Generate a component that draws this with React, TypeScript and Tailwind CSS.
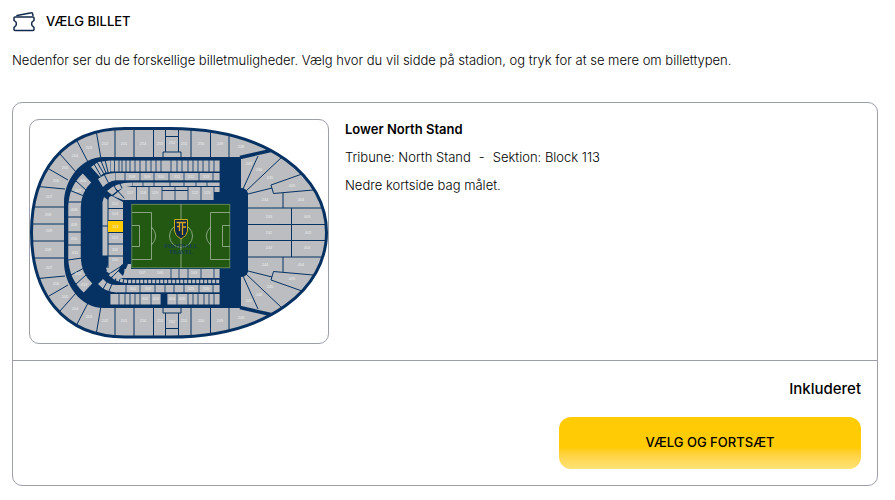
import React from "react";

const NAVY = "#063263";
const SEAT = "#bbbdc0";
const OUTLINE =
  "M125 128.500C62 128.500 31.500 173 31.500 232.500S62 337 125 337H170C270 337 326.500 288 326.500 232.500S270 128.500 170 128.500Z";

type Line = [number, number, number, number];
type Label = [number, number, string];

const outerLines: Line[] = [
  [115, 128, 115, 158],
  [134, 128, 134, 158],
  [153.5, 128, 153.5, 158],
  [191, 128, 191, 158],
  [210.5, 129, 210.5, 158],
  [229, 133, 229, 158],
  [96, 130, 101, 159],
  [76, 139, 88, 162],
  [60, 154, 76, 172],
  [49, 169, 68, 180],
  [33, 186, 65, 189],
  [31, 207, 65, 207],
  [30, 224, 65, 224],
  [243, 189, 258, 156],
  [246, 191, 282, 157],
  [248, 194, 272, 188],
  [283, 193, 283, 208],
  [248, 208, 326, 208],
  [291.5, 208, 291.5, 233],
  [248, 224.5, 328, 224.5],
];

const outerLabels: Label[] = [
  [49, 197, "207"], [48, 215, "208"], [49, 231, "209"], [56, 181, "206"],
  [65, 168, "205"], [75, 156, "204"], [89, 148, "203"], [105, 144, "202"],
  [124, 144, "201"], [143, 144, "254"], [160, 144, "253"], [172, 143, "252"],
  [184, 144, "251"], [201, 144, "250"], [220, 144, "249"], [241, 147, "248"],
  [249, 164, "247"], [259, 170, "246"], [270, 178, "245"], [292, 186, "405"],
  [265, 200, "244"], [301, 200, "404"], [269, 217, "243"], [307, 217, "403"],
  [269, 233, "242"], [308, 233, "402"],
];

function Lines({ items, width = 1 }: { items: Line[]; width?: number }) {
  return (
    <g stroke={NAVY} strokeWidth={width} fill="none">
      {items.map(([x1, y1, x2, y2], i) => (
        <line key={i} x1={x1} y1={y1} x2={x2} y2={y2} />
      ))}
    </g>
  );
}

function Row({ y, h, xs }: { y: number; h: number; xs: number[] }) {
  return (
    <g fill={SEAT}>
      {xs.slice(0, -1).map((x, i) => (
        <rect key={x} x={x + 0.4} y={y} width={xs[i + 1] - x - 0.8} height={h} />
      ))}
    </g>
  );
}

function OuterHalf() {
  return (
    <g>
      <Lines items={outerLines} />
      <path d="M165.5 128V152M178.5 128V152M165.5 136.5H178.5M163 157V152H181V157" fill="none" stroke={NAVY} />
      <path d="M302 174L271 185L273.500 193.500L313 190" fill="none" stroke={NAVY} />
      <path d="M240 157.500L273 150" stroke={NAVY} strokeWidth="3.500" />
    </g>
  );
}

function Labels({ items }: { items: Label[] }) {
  return (
    <g fill="#eceded" fontSize="4" textAnchor="middle" fontFamily="Liberation Sans, sans-serif">
      {items.map(([x, y, t], i) => (
        <text key={i} x={x} y={y + 1}>{t}</text>
      ))}
    </g>
  );
}

function StadiumMap() {
  return (
    <svg viewBox="30 120 298 223" className="block h-auto w-full" role="img" aria-label="Stadion">
      <clipPath id="stadium-outline">
        <path d={OUTLINE} />
      </clipPath>
      <path d={OUTLINE} fill={SEAT} />
      <g clipPath="url(#stadium-outline)">
        <OuterHalf />
        <g transform="translate(0 465) scale(1 -1)">
          <OuterHalf />
        </g>
      </g>
      <path d={OUTLINE} fill="none" stroke={NAVY} strokeWidth="3" />
      <path
        d="M104 157H241V188Q246 188 248 193V272Q246 277 241 277V308H104C80 308 64 284 64 262V203C64 181 80 157 104 157Z"
        fill={NAVY}
      />

      {/* Left curve of the middle tier */}
      <path d="M74.500 232V207Q75 189 87 178M74.500 232V258Q75 276 88 288" fill="none" stroke={SEAT} strokeWidth="12.500" />
      <Lines
        items={[
          [68, 202, 82, 202], [67, 217, 82, 217], [67, 232, 82, 232], [67, 245, 82, 245],
          [68, 260, 82, 258], [71, 275, 84, 268], [76, 181, 86, 190], [69, 190, 84, 196],
          [76, 284, 86, 275],
        ]}
      />

      {/* Upper rows */}
      <path d="M91 167L98 162L110 160.500V172Q103 172 100 177Z" fill={SEAT} />
      <Lines items={[[94, 164, 101, 176], [97, 162, 104, 174], [101, 161, 106, 173], [105, 160, 108, 172]]} />
      <Row y={160.5} h={11} xs={[110, 114.5, 119, 122, 126, 130, 135, 140, 146, 151, 156, 161, 171, 177, 182, 188, 193, 198, 203, 209, 214, 220]} />
      <path d="M98 179Q105 173 115 173V180.500Q109 181 103 187Z" fill={SEAT} />
      <Lines items={[[104, 174, 109, 184]]} />
      <Row y={173} h={7.3} xs={[115, 125, 140, 154, 169, 184, 199, 213, 220]} />
      <path d="M107 191Q115 182.500 132 182.500V186Q120 187 112 195Z" fill={SEAT} />
      <Lines items={[[113, 184, 117, 191], [119, 182, 122, 188]]} />
      <Row y={182.500} h={3.500} xs={[132, 143, 154, 170, 184, 196, 207, 220]} />
      <path d="M113 196L124 187H128V200H123Z" fill={SEAT} />
      <Lines items={[[116, 189, 125, 199]]} />
      <Row y={187} h={13} xs={[124, 136.5, 149, 162, 175, 188, 201, 214]} />
      <Row y={187} h={5} xs={[214, 220]} />
      <Lines items={[[162, 190.5, 188, 190.5]]} />

      {/* Lower tier beside the pitch */}
      <path d="M102.500 202L104 197L108 200V255.500H102.500Z" fill={SEAT} />
      <path d="M108 200Q109 196 112 196L123 202V264L109 272L106 269L108 265Z" fill={SEAT} />
      <Lines items={[[108, 198, 108, 268], [102, 226, 108, 226], [108, 208.5, 123, 208.5], [108, 220.500, 123, 220.500], [108, 232.500, 123, 232.500], [108, 244, 123, 244], [108, 256, 123, 256]]} />
      <rect x="108" y="221" width="15" height="11" fill="#ffcb05" />

      {/* Lower rows */}
      <path d="M106 271L123 262L118 271L124 277L118 280Z" fill={SEAT} />
      <Lines items={[[109, 274, 123, 265], [113, 276, 119, 270]]} />
      <path d="M128 264H131V269H150V278H122Z" fill={SEAT} />
      <Row y={269} h={9} xs={[124, 136, 149, 171, 179, 188, 201, 214, 220]} />
      <path d="M110 274Q117 281 129 281.500H220" fill="none" stroke={SEAT} strokeWidth="3.500" strokeDasharray="3 1" />
      <path d="M98 284L103 279Q108 285 117 285V292.500Q105 292 98 284Z" fill={SEAT} />
      <Lines items={[[103, 289, 107, 282], [109, 291, 112, 284]]} />
      <Row y={285} h={7.3} xs={[116, 126, 140, 155, 165, 174, 184, 199, 213, 220]} />
      <Row y={294} h={10.5} xs={[110, 119, 125, 130, 135, 140, 151, 161]} />
      <Row y={294} h={10.5} xs={[167, 177, 188, 193, 198, 204, 209, 214, 220]} />

      {/* Pitch */}
      <rect x="131.500" y="204" width="98.500" height="64" fill="#225812" />
      <g fill="none" stroke="#a2b89b" strokeWidth="0.800">
        <rect x="131.800" y="204.300" width="98" height="63.500" stroke="#6f9163" />
        <path d="M181 204V268" />
        <circle cx="181" cy="236" r="11.500" />
        <path d="M132 212.500H151.500V259.500H132M132 225.500H139.500V246.500H132M151.500 227Q160 236 151.500 245" />
        <path d="M230 212.500H210.500V259.500H230M230 225.500H222.500V246.500H230M210.500 227Q202 236 210.500 245" />
      </g>
      <path d="M174.500 219.500H187.500V231Q187 236 181 239Q175 236 174.500 231Z" fill="#102b49" stroke="#c9ac13" />
      <path d="M176.500 222.500H186M179.500 222V231M182.500 223V235M182.500 227H186M177 226.500H180" fill="none" stroke="#d9a519" strokeWidth="1.300" />
      <g fill="#153f4c" fontFamily="Liberation Serif, serif" fontWeight="700" fontSize="6" textAnchor="middle">
        <text x="181" y="247.500">FOOTBALL</text>
        <text x="181" y="253.500">TRAVEL</text>
      </g>

      <Labels items={outerLabels} />
      <Labels
        items={[
          ...outerLabels.filter(([, y]) => y < 225).map(([x, y, t]): Label => [x, 465 - y, t]),
          [74, 210, "408"], [74, 225, "409"], [74, 239, "410"], [75, 253, "411"], [78, 191, "407"], [83, 181, "406"],
          [78, 274, "412"], [84, 285, "413"], [115, 204, "115"], [115, 214, "114"], [115.500, 226.500, "113"],
          [115, 238, "112"], [115, 250, "111"], [115, 260, "110"], [130, 193, "117"], [143, 193, "118"],
          [155, 193, "119"], [195, 193, "122"], [207, 193, "123"], [132, 177, "308"], [147, 177, "309"],
          [161, 177, "310"], [177, 177, "311"], [191, 177, "312"], [206, 177, "313"], [133, 289, "301"],
          [148, 289, "302"], [191, 289, "325"], [206, 289, "326"], [145, 299, "402"], [156, 299, "403"],
          [172, 299, "404"], [182, 299, "405"], [142, 273, "107"], [160, 273, "106"], [194, 273, "103"],
        ]}
      />
    </svg>
  );
}

function TicketIcon() {
  return (
    <svg viewBox="0 0 24 24" className="size-6" fill="none" stroke="#12294b" strokeWidth="1.500" strokeLinejoin="round" strokeLinecap="round" aria-hidden="true">
      <path d="M3 7H21Q22 7 22 8V10.500L20 12Q19.300 14 20 15.500L22 17.500V19.500Q22 20.500 21 20.500H3Q2 20.500 2 19.500V17.500L4 15.500Q4.700 14 4 12L2 10.500V8Q2 7 3 7Z" />
      <path d="M5 5.500L19.500 2.800Q20.300 2.600 20.500 3.500L21 5.500" />
    </svg>
  );
}

export default function App() {
  return (
    <main className="bg-white pt-2.5 pr-[17px] pb-3.5 pl-3 font-['Inter',sans-serif] text-[13px] text-black">
      <header className="flex items-center gap-2.5">
        <TicketIcon />
        <h1 className="font-medium">VÆLG BILLET</h1>
      </header>
      <p className="mt-3 leading-7 font-light">
        Nedenfor ser du de forskellige billetmuligheder. Vælg hvor du vil sidde på stadion, og tryk for at se mere om billettypen.
      </p>

      <article className="mt-7 rounded-[10px] border border-[#9c9ea8]">
        <div className="flex gap-4 p-4">
          <div className="w-[300px] shrink-0 overflow-hidden rounded-[10px] border border-[#9c9ea8]">
            <StadiumMap />
          </div>
          <div className="-mt-1 leading-7 font-light">
            <h2 className="font-semibold">Lower North Stand</h2>
            <p className="flex gap-2">
              <span>Tribune: North Stand</span>
              <span>-</span>
              <span>Sektion: Block 113</span>
            </p>
            <p>Nedre kortside bag målet.</p>
          </div>
        </div>
        <div className="flex flex-col items-end gap-4 border-t border-[#9c9ea8] p-4">
          <p className="text-[15px] leading-6 font-medium">Inkluderet</p>
          <button
            type="button"
            className="h-[52px] w-[302px] rounded-xl bg-linear-to-b from-[#ffcb05] from-60% to-[#ffe375] font-medium"
          >
            VÆLG OG FORTSÆT
          </button>
        </div>
      </article>
    </main>
  );
}
